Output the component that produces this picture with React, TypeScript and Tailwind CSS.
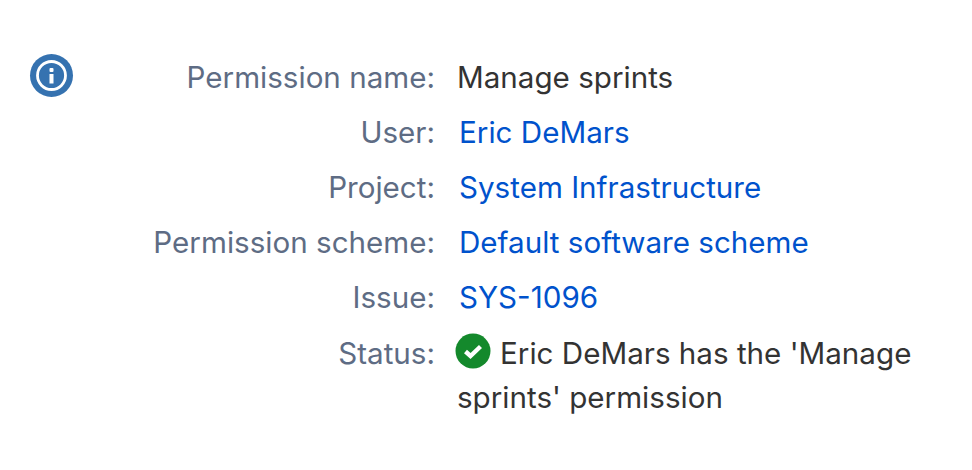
const rows = [
  { label: "Permission name:", value: "Manage sprints" },
  { label: "User:", value: "Eric DeMars", link: true },
  { label: "Project:", value: "System Infrastructure", link: true },
  { label: "Permission scheme:", value: "Default software scheme", link: true },
  { label: "Issue:", value: "SYS-1096", link: true },
];

function InfoIcon() {
  return (
    <svg width="46" height="46" viewBox="0 0 46 46" className="mt-px shrink-0">
      <circle cx="22.5" cy="22.5" r="21.5" fill="#3572b0" />
      <circle cx="22.5" cy="22.5" r="14" fill="none" stroke="#fff" strokeWidth="2.8" />
      <rect x="20.5" y="21" width="4" height="9.5" fill="#fff" />
      <rect x="20.5" y="15" width="4" height="4" rx="1" fill="#fff" />
    </svg>
  );
}

function CheckIcon() {
  return (
    <svg width="36" height="36" viewBox="0 0 36 36" className="absolute left-[-2px] top-[-3px]">
      <circle cx="18" cy="18" r="17.5" fill="#14892c" />
      <path d="M10.5 18.5 L15.5 23 L25.5 13.5" fill="none" stroke="#fff" strokeWidth="4.4" />
    </svg>
  );
}

export default function App() {
  return (
    <div className="h-[470px] w-[972px] overflow-hidden bg-white pl-[29px] pt-[52px] font-['Inter','Liberation_Sans',sans-serif] text-[29.6px] text-[#333333]">
      <div className="flex">
        <InfoIcon />
        <div className="flex min-w-0 flex-col">
          {rows.map((row) => (
            <div key={row.label} className="flex h-[55px] items-start">
              <div className="w-[360px] shrink-0 text-right leading-[50px] text-[#5e6c84]">{row.label}</div>
              <div className={"leading-[50px] " + (row.link ? "pl-[24px] text-[#0052cc]" : "pl-[22px]")}>{row.value}</div>
            </div>
          ))}
          <div className="flex items-start">
            <div className="w-[360px] shrink-0 pt-[4px] text-right leading-[44px] text-[#5e6c84]">Status:</div>
            <div className="w-[480px] pl-[22px] pt-[4px] leading-[44px]">
              <span className="relative mr-[13px] inline-block h-[30px] w-[30px] align-[-2px]">
                <CheckIcon />
              </span>
              Eric DeMars has the 'Manage sprints' permission
            </div>
          </div>
        </div>
      </div>
    </div>
  );
}
